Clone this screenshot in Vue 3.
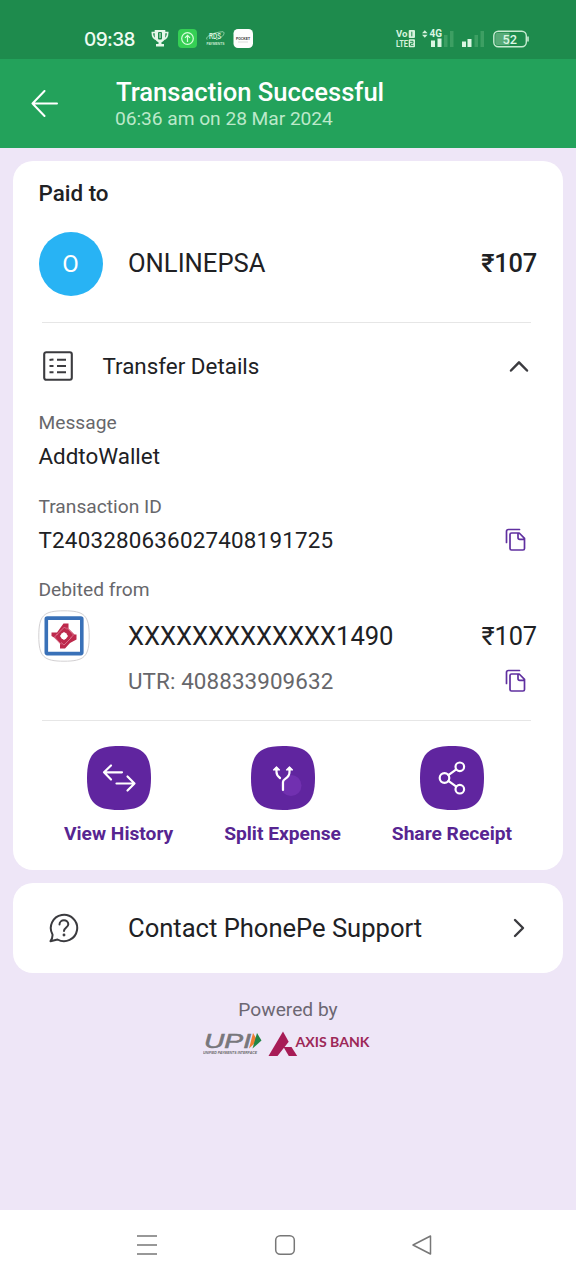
<script setup>
const actions = [
  { id: 'history', label: 'View History' },
  { id: 'split', label: 'Split Expense' },
  { id: 'share', label: 'Share Receipt' },
]
</script>

<template>
  <div class="screen">
    <div class="status">
      <span class="clock">09:38</span>
      <svg class="tray" width="180" height="24" viewBox="0 0 180 24">
        <g fill="none" stroke="#e6f7ea" stroke-width="1.6">
          <path d="M5.5 5.500H2.300C2.300 9.500 4 12 7 12.500M14.500 5.500H17.700C17.700 9.500 16 12 13 12.500" />
        </g>
        <path d="M4.700 3H15.300V9C15.300 12.500 13.500 14.500 11.500 15.300V17H14V19.500H6V17H8.500V15.300C6.500 14.500 4.700 12.500 4.700 9Z" fill="#e6f7ea" />
        <rect x="8" y="5" width="4" height="7.500" rx="1" fill="#1e8b4d" />
        <rect x="9.500" y="6" width="1" height="5" fill="#e6f7ea" />
        <rect x="28" y="2" width="19" height="19" rx="4" fill="#35cf54" />
        <g fill="none" stroke="#d8ffdc" stroke-width="1.200">
          <circle cx="37.500" cy="11.500" r="5.800" />
          <path d="M37.500 15V8.500M35 10.800L37.500 8.300L40 10.800" />
        </g>
        <path d="M57 12.500C55 10 62 5.500 73 4.700C76 6 72 11.500 66 12.500" fill="none" stroke="#a9dfba" stroke-width=".8" />
        <text x="59" y="12" class="rds" textLength="12" lengthAdjust="spacingAndGlyphs">RDS</text>
        <text x="56.500" y="17.500" class="payments" textLength="18" lengthAdjust="spacingAndGlyphs">PAYMENTS</text>
        <rect x="83.500" y="2" width="19.500" height="19" rx="4.500" fill="#fdfdfd" />
        <text x="86" y="12.500" class="pocket" textLength="14" lengthAdjust="spacingAndGlyphs">POCKET</text>
        <path d="M88 15H98" stroke="#ccc" stroke-width=".7" />
      </svg>
      <svg class="signals" width="136" height="24" viewBox="0 0 136 24">
        <text x="1" y="10.300" class="volte" textLength="11.500" lengthAdjust="spacingAndGlyphs">Vo</text>
        <text x="1" y="20.100" class="volte" textLength="12" lengthAdjust="spacingAndGlyphs">LTE</text>
        <rect x="13.700" y="3" width="6.300" height="8" rx="1" fill="#d5f2dd" />
        <rect x="13.700" y="12.300" width="6.300" height="8" rx="1" fill="#d5f2dd" />
        <path d="M16.800 4.700V9.300M15.200 14.300H18V16.300H15.500V18.300H18.500" fill="none" stroke="#1e8b4d" stroke-width="1" />
        <path d="M27 6.300L29.800 3.300L32.600 6.300ZM27 7.800L29.800 10.800L32.600 7.800Z" fill="#d5f2dd" />
        <text x="34.500" y="10.300" class="fourg" textLength="12.500" lengthAdjust="spacingAndGlyphs">4G</text>
        <g fill="#dcf6e3">
          <rect x="36" y="13.500" width="4" height="6.500" />
          <rect x="42.500" y="11.500" width="4" height="8.500" />
          <rect x="67" y="14.500" width="4" height="5.500" />
          <rect x="72.500" y="12" width="4" height="8" />
        </g>
        <g fill="#3d9f63">
          <rect x="49" y="8" width="3.500" height="12" />
          <rect x="55" y="4" width="3.500" height="16" />
          <rect x="79.500" y="8" width="3.500" height="12" />
          <rect x="85.500" y="4" width="3.500" height="16" />
        </g>
        <rect x="98.800" y="4.200" width="32.500" height="15.500" rx="4.500" fill="#1e8b4d" stroke="#c7ebd1" stroke-width="1.400" />
        <path d="M103 5.700H114.500V18.200H103Q100.300 18.200 100.300 15.500V8.400Q100.300 5.700 103 5.700Z" fill="#58ab78" />
        <path d="M133 9.500V14.500" stroke="#c7ebd1" stroke-width="1.600" />
        <text x="107.500" y="16.500" class="battery" textLength="14.500" lengthAdjust="spacingAndGlyphs">52</text>
      </svg>
    </div>

    <header class="header">
      <svg class="back" width="28" height="28" viewBox="0 0 28 28">
        <path d="M26 13.500H1.500M13.500 1L1.500 13.500L13.500 26" fill="none" stroke="#fff" stroke-width="2" stroke-linecap="round" stroke-linejoin="round" />
      </svg>
      <div class="heading">
        <div class="title">Transaction Successful</div>
        <div class="when">06:36 am on 28 Mar 2024</div>
      </div>
    </header>

    <main class="content">
      <section class="card receipt">
        <div class="paid">Paid to</div>
        <div class="payee">
          <div class="avatar">O</div>
          <span class="payee-name">ONLINEPSA</span>
          <span class="amount bold">₹107</span>
        </div>
        <div class="divider first"></div>

        <div class="transfer">
          <svg width="30" height="30" viewBox="0 0 30 30" fill="none" stroke="#3b3b3f" stroke-width="2.100">
            <rect x="1.200" y="1.200" width="27.600" height="27.600" rx="2" />
            <path d="M6.500 9L8 8.800L10.500 8.500M14 8.800H23M6.500 15H10.500M14 15H23M6.500 21.200H10.500M14 21.200H23" />
          </svg>
          <span class="transfer-title">Transfer Details</span>
          <svg class="chevron-up" width="20" height="14" viewBox="0 0 20 14">
            <path d="M2 11.500L10 3.300L18 11.500" fill="none" stroke="#3b3b3f" stroke-width="2.500" stroke-linecap="round" stroke-linejoin="round" />
          </svg>
        </div>

        <div class="label message">Message</div>
        <div class="value wallet">AddtoWallet</div>
        <div class="label id">Transaction ID</div>
        <div class="value">
          <span class="txn">T2403280636027408191725</span>
          <svg class="copy" width="22" height="24" viewBox="0 0 22 24" fill="none" stroke="#6030a0" stroke-width="1.700" stroke-linejoin="round" stroke-linecap="round">
            <path d="M1.500 14.500V3.500Q1.500 1.500 3.500 1.500H14.500M7 5H14.200L19.500 10.300V20.500Q19.500 22 18 22H6.500Q5 22 5 20.500V6.500Q5 5 6.500 5ZM13 5.500V9.500Q13 11.300 14.800 11.300H19" />
          </svg>
        </div>
        <div class="label debited">Debited from</div>
        <div class="account">
          <svg class="bank" width="52" height="52" viewBox="0 0 52 52">
            <path d="M26 .8C46.500 .8 51.200 5.500 51.200 26S46.500 51.200 26 51.200S.8 46.500 .8 26S5.500 .8 26 .8Z" fill="#fff" stroke="#d2d0d2" stroke-width="1" />
            <rect x="8.300" y="8.100" width="35.500" height="35.500" rx="1" fill="#fff" stroke="#3971b8" stroke-width="3.600" />
            <path d="M25.500 13.500H30.500V18.500L36.500 24.500H38.500V29.500L32 33L27 38.500H22V33.500L16 27.500L13.500 26V22.500H19Z" fill="#bd294c" />
            <path d="M18.500 25L26.500 17L29 19.500M29 17.500L35.500 25L32.500 28M33.500 27.500L26 35L23 32.500M23 34.500L16.500 27L19.500 24" fill="none" stroke="#e58fa5" stroke-width=".7" />
            <path d="M26 22L28 23.300L30 26L28.300 28.300L26 30L23.500 28.300L22 26L23.700 23.500Z" fill="#fff" />
          </svg>
          <span class="masked">XXXXXXXXXXXXX1490</span>
          <span class="amount">₹107</span>
        </div>
        <div class="utr-row">
          <span class="utr">UTR: 408833909632</span>
          <svg class="copy" width="22" height="24" viewBox="0 0 22 24" fill="none" stroke="#6030a0" stroke-width="1.700" stroke-linejoin="round" stroke-linecap="round">
            <path d="M1.500 14.500V3.500Q1.500 1.500 3.500 1.500H14.500M7 5H14.200L19.500 10.300V20.500Q19.500 22 18 22H6.500Q5 22 5 20.500V6.500Q5 5 6.500 5ZM13 5.500V9.500Q13 11.300 14.800 11.300H19" />
          </svg>
        </div>
        <div class="divider second"></div>

        <div class="actions">
          <div v-for="a in actions" :key="a.id" class="action">
            <svg width="64" height="64" viewBox="0 0 64 64" fill="none" stroke="#fff" stroke-width="2.200" stroke-linecap="round" stroke-linejoin="round">
              <path d="M32 0C56 0 64 8 64 32S56 64 32 64S0 56 0 32S8 0 32 0Z" fill="#60259f" stroke="none" />
              <path v-if="a.id === 'history'" d="M35 26.300H17M24 19.500L17 26.300L24 33.500M29.500 37.500H47.500M40.500 30.500L47.500 37.500L40.500 44.500" />
              <template v-else-if="a.id === 'split'">
                <circle cx="40" cy="39.500" r="10.500" fill="#7130b0" stroke="none" />
                <path d="M32 44V36C32 32 38.500 33 38.500 26V22.500M25.500 22.500V26C25.500 29 27 30.500 29 32" />
                <path d="M22.500 24L25.500 20.800L28.500 24ZM35.500 24L38.500 20.800L41.500 24Z" fill="#fff" stroke-width="1.200" />
              </template>
              <template v-else>
                <circle cx="24.500" cy="32" r="4.800" />
                <circle cx="39.800" cy="20.800" r="4.300" />
                <circle cx="39.800" cy="43.200" r="4.300" />
                <path d="M28.400 29.200L36.300 23.400M28.400 34.800L36.300 40.600" />
              </template>
            </svg>
            <span>{{ a.label }}</span>
          </div>
        </div>
      </section>

      <section class="card support">
        <svg width="30" height="30" viewBox="0 0 30 30" fill="none" stroke="#3b3b3f" stroke-width="2" stroke-linecap="round" stroke-linejoin="round">
          <path d="M3.500 21.500A13.200 13.200 0 1 1 8.500 26.500L1.500 28.200Q3.800 25 3.500 21.500Z" />
          <path d="M10.500 11.500C10.500 6 19.300 6 19.300 11.300C19.300 14.500 15 14.500 15 18" />
          <circle cx="15" cy="22" r=".6" fill="#3b3b3f" stroke-width="1.700" />
        </svg>
        <span class="support-title">Contact PhonePe Support</span>
        <svg class="chevron-right" width="12" height="20" viewBox="0 0 12 20">
          <path d="M2 2L10 10L2 18" fill="none" stroke="#3b3b3f" stroke-width="2.400" stroke-linecap="round" stroke-linejoin="round" />
        </svg>
      </section>

      <div class="powered">Powered by</div>
      <svg class="brands" width="168" height="28" viewBox="0 0 168 28">
        <text x="1" y="18.300" class="upi" textLength="47" lengthAdjust="spacingAndGlyphs">UPI</text>
        <path d="M50 3L54.500 10.500L46 18.500Z" fill="#ee7f32" />
        <path d="M54 3L58.500 10.500L49.500 18.500Z" fill="#218545" />
        <text x="0" y="24.300" class="upi-sub" textLength="54" lengthAdjust="spacingAndGlyphs">UNIFIED PAYMENTS INTERFACE</text>
        <path d="M80 1.500L85.700 11.800L74.500 26H65.500Z" fill="#a71c56" />
        <path d="M80.500 17H88.500L94.200 26H85.800Z" fill="#a71c56" />
        <text x="92.500" y="16.500" class="axis" textLength="74" lengthAdjust="spacingAndGlyphs">AXIS BANK</text>
      </svg>
    </main>

    <nav class="nav">
      <svg width="22" height="22" viewBox="0 0 22 22"><path d="M1 2H21M1 11H21M1 20H21" stroke="#777" stroke-width="1.500" /></svg>
      <svg width="22" height="22" viewBox="0 0 22 22"><rect x="1.700" y="1.700" width="18.600" height="18.600" rx="4.500" fill="none" stroke="#777" stroke-width="1.500" /></svg>
      <svg width="22" height="22" viewBox="0 0 22 22"><path d="M19.500 2V20L2 11Z" fill="none" stroke="#777" stroke-width="1.500" stroke-linejoin="round" /></svg>
    </nav>
  </div>
</template>

<style>
body { margin: 0; }
</style>

<style scoped>
* { box-sizing: border-box; }
svg { display: block; flex: none; }
.screen {
  width: 576px;
  height: 1280px;
  display: flex;
  flex-direction: column;
  overflow: hidden;
  background: #eee6f7;
  color: #202124;
  font-family: Roboto, "Liberation Sans", sans-serif;
  white-space: nowrap;
}
.status {
  height: 59px;
  padding: 19px 45px 0 84px;
  display: flex;
  align-items: center;
  background: #1e8b4d;
}
.clock { width: 66px; font: 500 19px Inter, Roboto, sans-serif; letter-spacing: -.6px; color: #effbf2; }
.tray { margin-top: -1px; }
.signals { margin-left: auto; margin-top: -1px; }
.rds { font: bold 9px "Liberation Sans", sans-serif; fill: #d5f2dd; }
.payments { font: bold 4px "Liberation Sans", sans-serif; fill: #c3e9ce; }
.pocket { font: bold 3.600px "Liberation Sans", sans-serif; fill: #333; }
.volte { font: bold 9.500px Roboto, sans-serif; fill: #d5f2dd; }
.fourg { font: bold 10.500px Roboto, sans-serif; fill: #dcf6e3; }
.battery { font: 500 13px Roboto, sans-serif; fill: #dcf6e3; }
.header { height: 89px; padding-left: 31px; display: flex; align-items: center; background: #23a25b; }
.heading { margin-left: 57px; padding-top: 1px; }
.title { height: 28px; font-size: 25.600px; line-height: 28px; font-weight: 500; color: #fff; }
.when { height: 24px; margin-left: -1px; font-size: 19.200px; line-height: 26px; letter-spacing: -.04px; color: #bce9ca; }
.content { flex: 1; padding: 13px 13px 0; }
.card { background: #fff; border-radius: 20px; }
.receipt { height: 709px; padding: 0 26px 0 25.500px; }
.paid { height: 64px; line-height: 64px; font-size: 22.400px; font-weight: 500; }
.payee { height: 64px; margin-top: 7px; display: flex; align-items: center; font-size: 25.600px; }
.payee-name { margin-top: -2px; }
.avatar { width: 64px; height: 64px; margin-right: 25.500px; border-radius: 50%; background: #28b3f4; color: #fff; text-align: center; line-height: 64px; font-size: 24px; }
.amount { margin-left: auto; font-size: 25.400px; letter-spacing: -.1px; }
.bold { font-size: 25.400px; margin-top: -2px; font-weight: 500; letter-spacing: -.2px; }
.divider { height: 1px; margin-left: 3px; margin-right: 6px; background: #e6e6e6; }
.first { margin-top: 26px; }
.transfer { height: 44px; margin-top: 21px; padding-left: 4px; padding-right: 9px; display: flex; align-items: center; }
.transfer-title { margin-left: 30px; font-size: 22.400px; }
.chevron-up { margin-left: auto; margin-right: -.5px; }
.label { height: 24px; line-height: 26px; margin-top: 24px; font-size: 19.200px; color: #67676b; }
.message { margin-top: 22px; }
.debited { line-height: 24px; }
.value { height: 28px; margin-top: 8px; display: flex; align-items: center; font-size: 22.400px; }
.txn { letter-spacing: .2px; }
.copy { margin-left: auto; margin-right: 10.500px; }
.account { height: 52px; margin-top: 8px; display: flex; align-items: center; }
.bank { margin-left: -.5px; }
.masked { margin-left: 38px; font-size: 25.600px; letter-spacing: -.04px; }
.utr-row { height: 28px; margin-top: 5px; padding-left: 89.500px; display: flex; align-items: center; font-size: 22.400px; letter-spacing: .1px; color: #67676b; }
.second { margin-top: 25px; }
.actions { margin-top: 25px; display: flex; padding-left: 25.500px; padding-right: 25px; justify-content: space-between; }
.action { display: flex; flex-direction: column; align-items: center; gap: 12px; color: #572591; font-size: 19.200px; line-height: 24px; font-weight: 700; }
.support { height: 90px; margin-top: 13px; padding-left: 36px; padding-right: 38.500px; display: flex; align-items: center; font-size: 25.600px; }
.support-title { margin-left: 49px; letter-spacing: -.02px; }
.chevron-right { margin-left: auto; }
.powered { height: 24px; margin-top: 25px; line-height: 24px; text-align: center; font-size: 19.200px; color: #6c6772; }
.brands { margin: 8px auto 0 190px; }
.upi { font: italic 20px "Liberation Sans", sans-serif; fill: #78777c; stroke: #78777c; stroke-width: .6px; }
.upi-sub { font: italic bold 4px "Liberation Sans", sans-serif; fill: #666; }
.axis { font: 700 12.500px Lato, sans-serif; fill: #9d2857; }
.nav { height: 70px; padding: 0 143px 0 136px; display: flex; align-items: center; justify-content: space-between; background: #fff; }
</style>
